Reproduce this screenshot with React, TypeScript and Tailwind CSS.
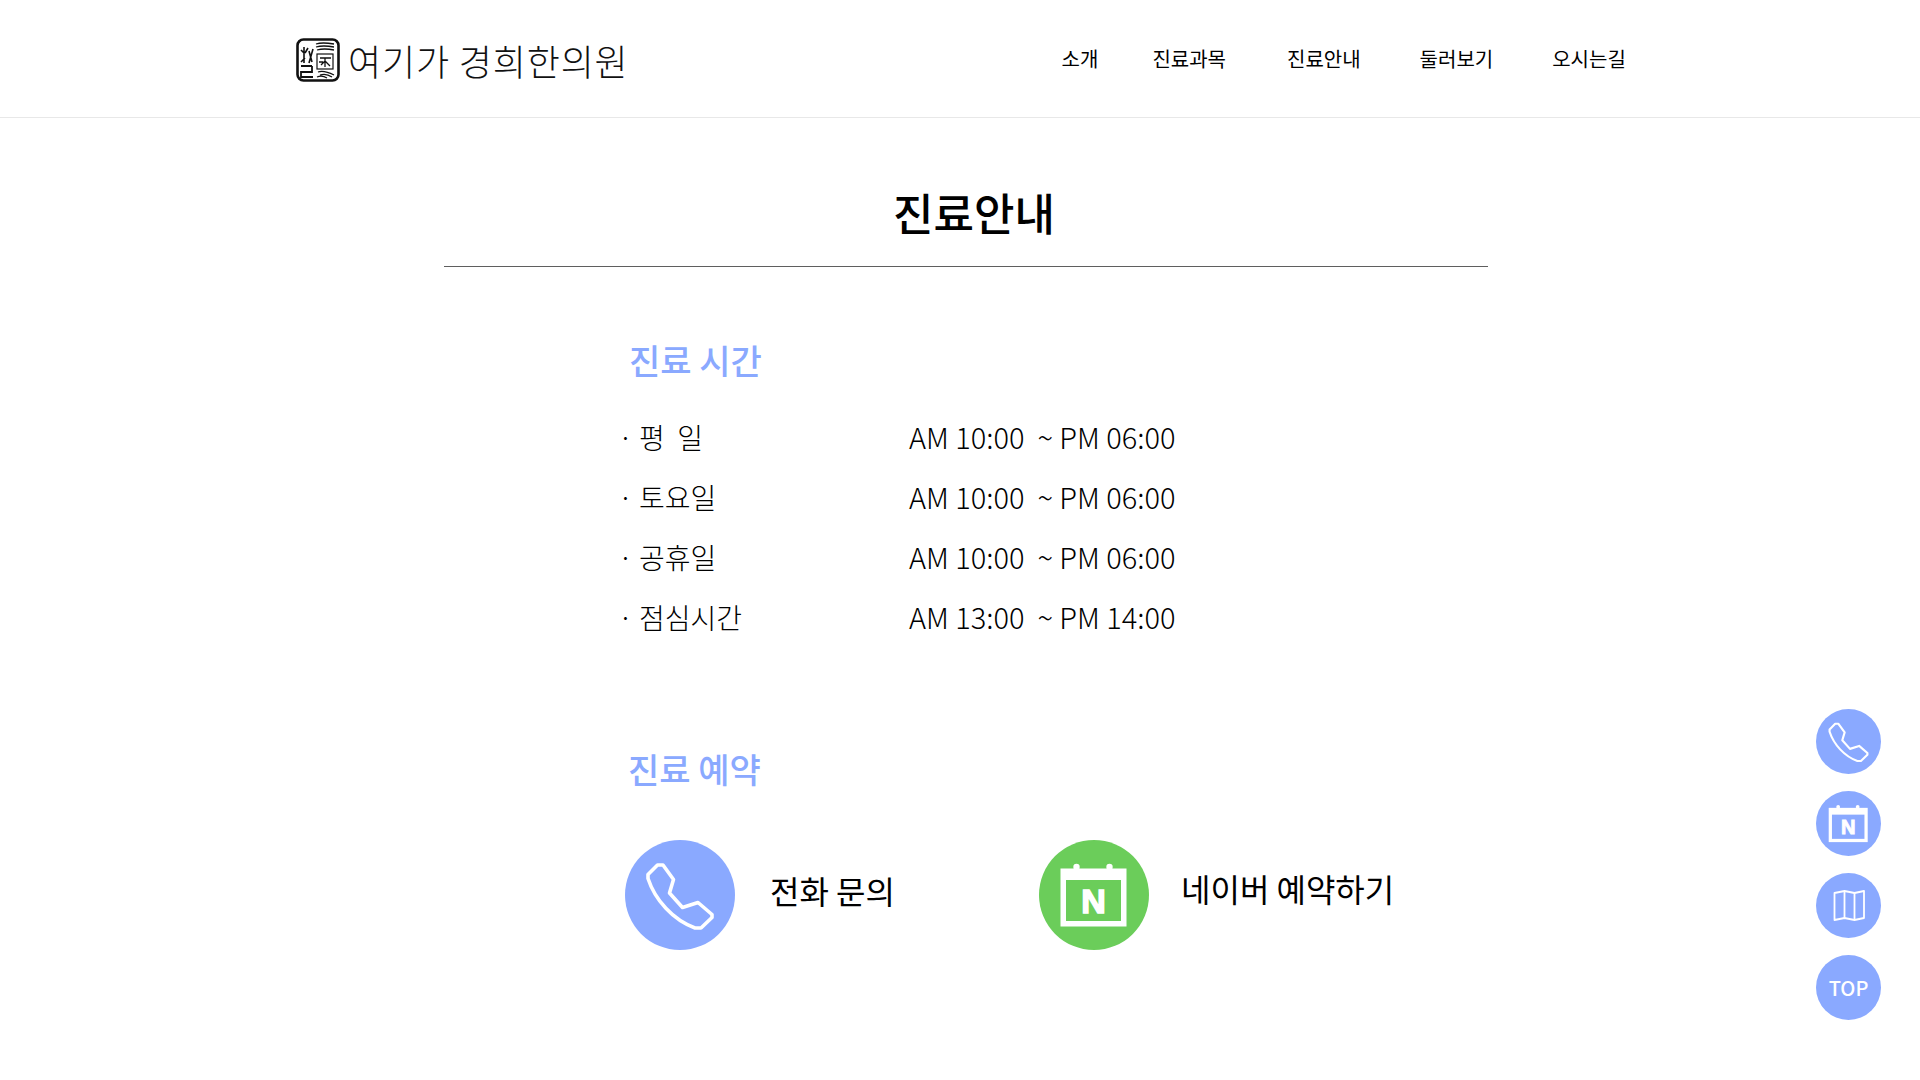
const navItems = [
  { label: '소개', className: 'ml-0' },
  { label: '진료과목', className: 'ml-[54px]' },
  { label: '진료안내', className: 'ml-[61px]' },
  { label: '둘러보기', className: 'ml-[59px]' },
  { label: '오시는길', className: 'ml-[59px]' },
];

const hours = [
  { day: '평  일', time: 'AM 10:00  ~ PM 06:00' },
  { day: '토요일', time: 'AM 10:00  ~ PM 06:00' },
  { day: '공휴일', time: 'AM 10:00  ~ PM 06:00' },
  { day: '점심시간', time: 'AM 13:00  ~ PM 14:00' },
];

function PhoneIcon({ className }: { className?: string }) {
  return (
    <svg viewBox="0 0 110 110" className={className} fill="none" stroke="#fff" strokeWidth="3.6" strokeLinejoin="round">
      <path d="M32.5 25 L38 25 L48.5 39.5 L44.5 53 L57.5 67.5 L73 62.5 L87 74.5 L87 77.5 L76 88 L70 88 C48 80 30 60 23 38.5 L23 34.5 Z" />
    </svg>
  );
}

function NaverCalendarIcon({ className, fill }: { className?: string; fill: string }) {
  return (
    <svg viewBox="0 0 110 110" className={className}>
      <circle cx="37.5" cy="27" r="3.2" fill="#fff" />
      <circle cx="70.5" cy="27" r="3.2" fill="#fff" />
      <rect x="21.5" y="28.5" width="66" height="58" fill="#fff" />
      <rect x="27" y="40" width="55" height="41" fill={fill} />
      <text x="54.5" y="73" textAnchor="middle" fontSize="34" fontWeight="900" fill="#fff" fontFamily="'Liberation Sans', sans-serif" stroke="#fff" strokeWidth="1.5">
        N
      </text>
    </svg>
  );
}

function MapIcon({ className }: { className?: string }) {
  return (
    <svg viewBox="0 0 65 65" className={className} fill="none" stroke="#fff" strokeWidth="1.8" strokeLinejoin="round">
      <path d="M18.5 20 L28.5 18 L38.5 20 L48 18 L48 45 L38.5 47 L28.5 45 L18.5 47 Z" />
      <path d="M28.5 18 V45 M38.5 20 V47" />
    </svg>
  );
}

function SealLogo() {
  return (
    <svg viewBox="0 0 44 44" className="mt-[3px] h-[44px] w-[44px]" fill="none" stroke="#111" strokeWidth="1.3">
      <rect x="1.5" y="1.5" width="41" height="41" rx="6" fill="#fff" strokeWidth="2.6" />
      <path d="M20 6 Q26 4 38 6 M20 9 Q27 7 38 9 M21 12 Q28 10 38 12" />
      <path d="M8 9 V25 M5 12 L8 15 M12 10 L9 15 M13 13 L16 24 M17 11 L13 25 M5 24 L9 20" strokeWidth="1.6" />
      <path d="M5 28 H16 M16 28 V34 H5 V39 H17" strokeWidth="1.8" />
      <rect x="21" y="16" width="16" height="15" strokeWidth="1.2" />
      <path d="M24 20 H35 M29 20 V29 M25 27 L29 23 L34 28 M23 24 H27" />
      <path d="M22 34 Q28 32 38 37 M24 37 Q30 35 36 39 M21 39 Q26 37 31 40" />
    </svg>
  );
}

function SideButton({ children }: { children: React.ReactNode }) {
  return (
    <button className="flex h-[65px] w-[65px] items-center justify-center rounded-full bg-[#8aa9ff] text-white">
      {children}
    </button>
  );
}

export default function App() {
  return (
    <div className="min-h-[1080px] bg-white text-black font-['Noto_Sans_CJK_KR','Noto_Sans',sans-serif]">
      {/* Header */}
      <header className="h-[118px] border-b border-[#e8e8e8]">
        <div className="flex h-[117px] items-center pl-[296px]">
          <SealLogo />
          <span className="ml-[8px] mt-[2px] text-[36px] font-light tracking-[0.85px] text-[#111]">여기가 경희한의원</span>
          <nav className="ml-[433px] flex items-center text-[20px]">
            {navItems.map((item) => (
              <a key={item.label} className={item.className}>
                {item.label}
              </a>
            ))}
          </nav>
        </div>
      </header>

      <main>
        <h1 className="mt-[64px] pl-[893px] text-[44px] font-medium leading-[60px]">진료안내</h1>
        <div className="ml-[444px] mt-[24px] h-px w-[1044px] bg-[#5f5f5f]" />

        {/* Hours */}
        <section className="ml-[618px] mt-[69px]">
          <h2 className="ml-[11px] text-[34px] font-medium leading-[48px] text-[#8aa9ff]">진료 시간</h2>
          <ul className="mt-[23px] flex flex-col text-[28px] font-light">
            {hours.map((row) => (
              <li key={row.day} className="flex h-[60px] items-center">
                <span className="w-[21px] text-[28px] leading-none">·</span>
                <span className="w-[270px] whitespace-pre">{row.day}</span>
                <span className="whitespace-pre text-[29px]">{row.time}</span>
              </li>
            ))}
          </ul>
        </section>

        {/* Booking */}
        <section className="ml-[628px] mt-[98px]">
          <h2 className="text-[34px] font-medium leading-[48px] text-[#8aa9ff]">진료 예약</h2>
          <div className="-ml-[3px] mt-[47px] flex items-center">
            <div className="h-[110px] w-[110px] rounded-full bg-[#8aa9ff]">
              <PhoneIcon className="h-full w-full" />
            </div>
            <span className="ml-[35px] mb-[10px] w-[269px] text-[32px]">전화 문의</span>
            <div className="h-[110px] w-[110px] rounded-full bg-[#6bcd5a]">
              <NaverCalendarIcon className="h-full w-full" fill="#6bcd5a" />
            </div>
            <span className="ml-[32px] mb-[14px] text-[32px]">네이버 예약하기</span>
          </div>
        </section>
      </main>

      {/* Floating quick menu */}
      <div className="fixed bottom-[60px] right-[39px] flex flex-col gap-[17px]">
        <SideButton>
          <PhoneIcon className="h-[65px] w-[65px]" />
        </SideButton>
        <SideButton>
          <NaverCalendarIcon className="h-[65px] w-[65px]" fill="#8aa9ff" />
        </SideButton>
        <SideButton>
          <MapIcon className="h-[65px] w-[65px]" />
        </SideButton>
        <SideButton>
          <span className="text-[20px] font-medium">TOP</span>
        </SideButton>
      </div>
    </div>
  );
}
